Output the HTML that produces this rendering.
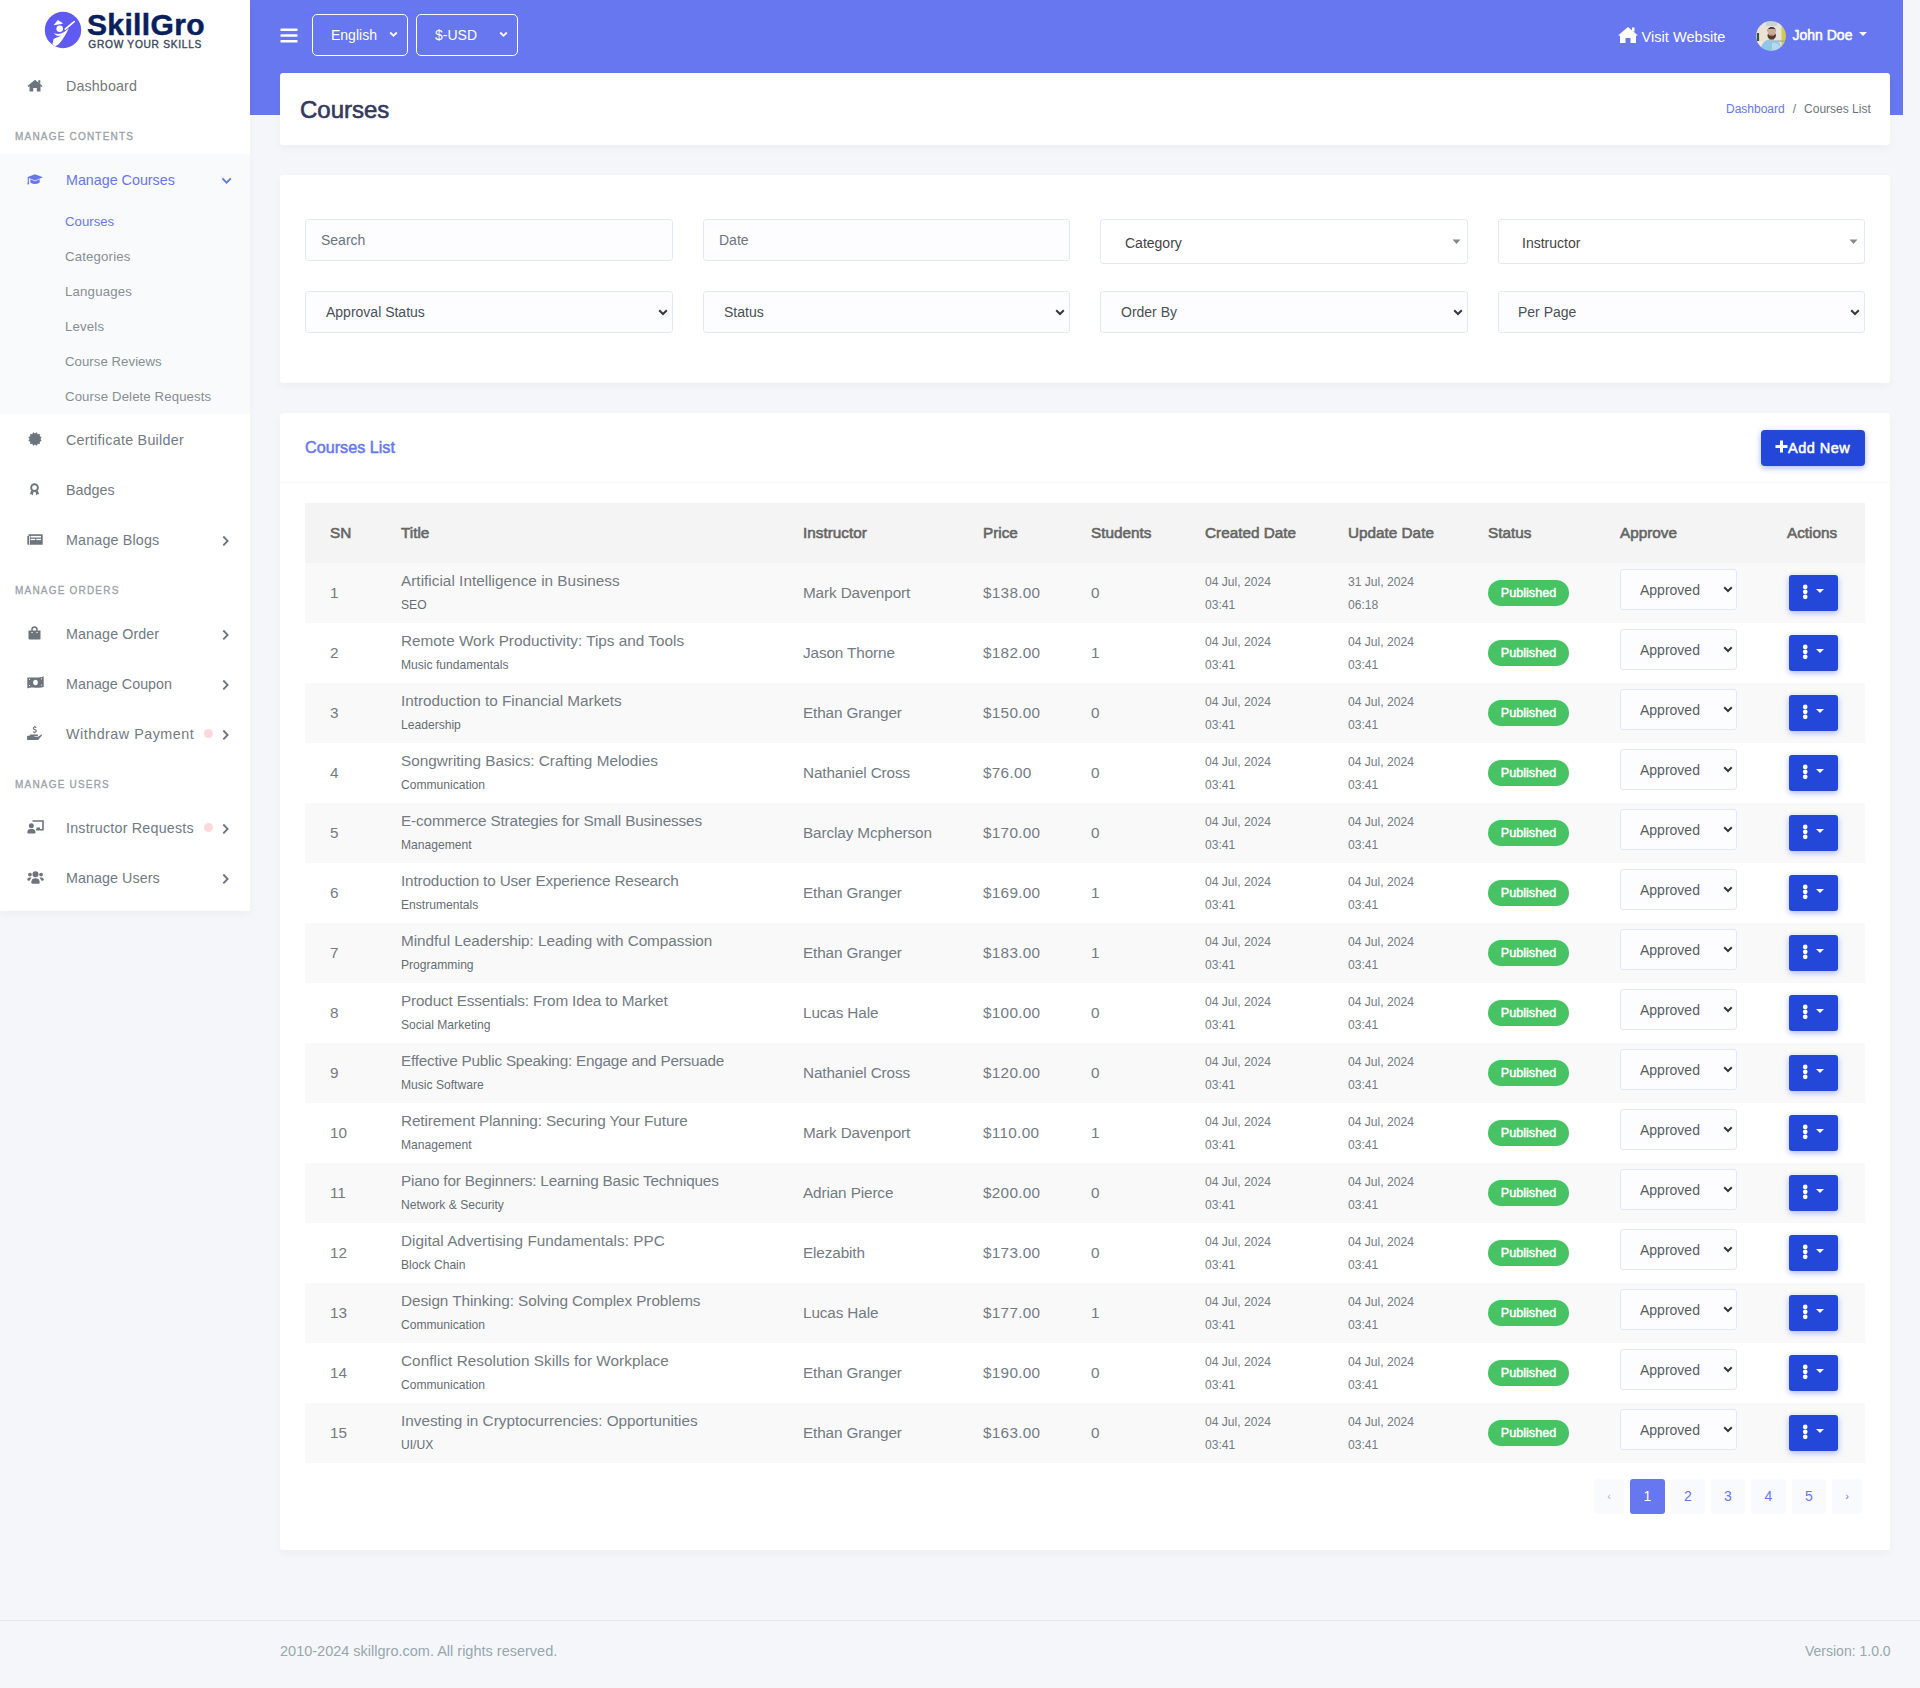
<!DOCTYPE html>
<html><head><meta charset="utf-8">
<style>
*{box-sizing:border-box}
html,body{margin:0;padding:0}
body{width:1920px;height:1688px;position:relative;overflow:hidden;background:#f4f6f9;font-family:"Liberation Sans",sans-serif;color:#6c757d}
.abs{position:absolute}
.navbg{position:absolute;left:250px;top:0;width:1653px;height:115px;background:#6777ef}
.side{position:absolute;left:0;top:0;width:250px;height:911px;background:#fff;box-shadow:0 4px 8px rgba(0,0,0,.03)}
.card{position:absolute;left:280px;width:1610px;background:#fff;border-radius:3px;box-shadow:0 4px 8px rgba(0,0,0,.03)}
.nav-item{position:absolute;left:0;width:250px;height:50px}
.nav-item .ic{position:absolute;left:27px;top:18px;width:15px;height:15px}
.nav-item .tx{position:absolute;left:66px;top:0;line-height:50px;font-size:14.3px;color:#727a82;white-space:nowrap;letter-spacing:0.15px}
.nav-item .chev{position:absolute;left:221px}
.mh{position:absolute;left:15px;font-size:10px;font-weight:400;letter-spacing:1.2px;color:#9aa1a8;line-height:20px;-webkit-text-stroke:0.3px #9aa1a8;margin-top:1px}
.sub{position:absolute;left:65px;font-size:13.2px;color:#868e96;line-height:20px;white-space:nowrap;letter-spacing:0.15px;margin-top:1px}
.dot{position:absolute;left:204px;width:9px;height:9px;border-radius:50%;background:#fdd7d9;margin-top:-1px}
.fc{position:absolute;height:42px;border:1px solid #e4e6fc;border-radius:3px;background:#fdfdff}
.fc .t{position:absolute;top:11px;font-size:14px;line-height:18px;white-space:nowrap}
.fc svg{position:absolute}
table{border-collapse:collapse;table-layout:fixed;position:absolute;left:25px;top:90px;width:1560px}
th{height:60px;padding:0 0 0 25px;text-align:left;font-size:15.3px;font-weight:400;color:#666;background:#f4f4f4;white-space:nowrap;-webkit-text-stroke:0.6px #666}
td{height:60px;padding:0 0 0 25px;font-size:15.3px;color:#737b83;white-space:nowrap;vertical-align:middle}
tbody tr:nth-child(odd) td{background:#f9f9f9}
.tt{font-size:15.3px;line-height:20px;display:block;margin-top:-3px}
.ts{color:#656d74;font-size:12.1px;line-height:18px;display:block;margin-top:3.5px;position:relative;top:2px}
.dt{font-size:12.1px;line-height:23.5px;padding-top:2px}
.badge{display:inline-block;width:81px;height:26px;border-radius:13px;background:#47c363;color:#fff;font-size:12.6px;line-height:26px;text-align:center;-webkit-text-stroke:0.45px #fff;position:relative;top:0px}
.apv{position:relative;width:117px;height:41px;border:1px solid #e4e6fc;border-radius:3px;background:#fdfdff;top:-3.5px}
.apv span{position:absolute;left:19px;top:11px;font-size:14px;line-height:18px;color:#575e65}
.apv svg{position:absolute;left:102px;top:16px}
.act{position:relative;width:49px;height:36px;border-radius:3px;background:#2347d9;box-shadow:0 2px 6px #acb5f6;margin-left:2px;top:-0.5px}
.act svg{position:absolute;left:0;top:0}
.pg{position:absolute;top:1066px;height:35px;border-radius:3px;background:#f9fafe;color:#6777ef;font-size:14px;line-height:35px;text-align:center}
</style></head>
<body>
<div class="navbg"></div>

<!-- SIDEBAR -->
<div class="side">
  <!-- logo -->
  <svg class="abs" style="left:44.35px;top:11.25px" width="38" height="38" viewBox="0 0 38 38">
    <defs><clipPath id="lc"><circle cx="19" cy="19" r="18.2"/></clipPath></defs>
    <circle cx="19" cy="19" r="18.2" fill="#5f5af6"/>
    <g clip-path="url(#lc)" fill="#fff">
    <path d="M13.8 9 L19.05 12.3 L17.5 12.9 L9.6 14.3 Z"/>
    <circle cx="15.7" cy="17.8" r="3.3"/>
    <path d="M24.8 17.3 C 22.5 22, 20 27.5, 15 33 L 11.6 35.3 L 8.2 34.3 L 9.6 28.1 C 12 26.6, 15 25.6, 18.3 24.2 C 15 25.2, 11.8 25.3, 9.8 21.9 C 13 23.3, 17 23.5, 20.8 20.5 Z"/>
    <path d="M21.3 18.2 L30.2 10.6" stroke="#fff" stroke-width="1.7" stroke-linecap="round"/>
    </g>
  </svg>
  <div class="abs" style="left:87px;top:7px;font-size:30px;font-weight:700;color:#0a1f5c;letter-spacing:0.35px;line-height:36px;-webkit-text-stroke:0.5px #0a1f5c">SkillGro</div>
  <div class="abs" style="left:88.3px;top:39.1px;font-size:10.2px;color:#434d60;letter-spacing:0.72px;line-height:12px;-webkit-text-stroke:0.4px #3f4a5e">GROW YOUR SKILLS</div>

  <div class="nav-item" style="top:61px">
    <svg class="ic" viewBox="0 0 16 13" style="left:27px;top:18px;width:16px;height:13px"><path d="M8 0.8 L15.5 7 L14.6 8 L13.5 7.1 L13.5 12.5 L9.8 12.5 L9.8 9 L6.2 9 L6.2 12.5 L2.5 12.5 L2.5 7.1 L1.4 8 L0.5 7 Z" fill="#6c757d"/><rect x="11.3" y="1.2" width="2" height="3.5" fill="#6c757d"/></svg>
    <div class="tx" style="letter-spacing:0.112px">Dashboard</div>
  </div>
  <div class="mh" style="top:126px">MANAGE CONTENTS</div>

  <div class="abs" style="left:0;top:154px;width:250px;height:260px;background:#f8fafb"></div>
  <div class="nav-item" style="top:155px">
    <svg class="ic" viewBox="0 0 16 11" style="left:27px;top:19px;width:16px;height:11px"><path d="M0 3.3 L8 0.2 L16 3.3 L8 6.4 Z M3.3 5.3 L3.3 8.6 Q8 11.6 12.7 8.6 L12.7 5.3 L8 7.2 Z" fill="#6777ef"/><path d="M1.3 3.6 L1.3 9.3" stroke="#6777ef" stroke-width="1.1"/><rect x="0.5" y="8.6" width="1.6" height="1.8" fill="#6777ef"/></svg>
    <div class="tx" style="color:#6777ef;letter-spacing:-0.004px">Manage Courses</div>
    <svg class="chev" style="top:22px" width="12" height="8" viewBox="0 0 12 8"><path d="M1.4 1.4 L5.6 5.6 L9.8 1.4" stroke="#6777ef" stroke-width="1.9" fill="none"/></svg>
  </div>
  <div class="sub" style="top:211px;color:#6777ef;letter-spacing:0.017px">Courses</div>
  <div class="sub" style="top:246px;letter-spacing:0.183px">Categories</div>
  <div class="sub" style="top:281px;letter-spacing:0.200px">Languages</div>
  <div class="sub" style="top:316px;letter-spacing:0.170px">Levels</div>
  <div class="sub" style="top:351px;letter-spacing:0.050px">Course Reviews</div>
  <div class="sub" style="top:386px;letter-spacing:0.117px">Course Delete Requests</div>

  <div class="nav-item" style="top:415px">
    <svg class="ic" viewBox="0 0 16 16" style="left:27px;top:15.5px;width:16px;height:16px"><path d="M9.79 1.34 L10.75 3.24 L12.88 3.12 L12.76 5.25 L14.66 6.21 L13.50 8.00 L14.66 9.79 L12.76 10.75 L12.88 12.88 L10.75 12.76 L9.79 14.66 L8.00 13.50 L6.21 14.66 L5.25 12.76 L3.12 12.88 L3.24 10.75 L1.34 9.79 L2.50 8.00 L1.34 6.21 L3.24 5.25 L3.12 3.12 L5.25 3.24 L6.21 1.34 L8.00 2.50 Z" fill="#6c757d"/></svg>
    <div class="tx" style="letter-spacing:0.272px">Certificate Builder</div>
  </div>
  <div class="nav-item" style="top:465px">
    <svg class="ic" viewBox="0 0 16 16" style="top:17px"><circle cx="8" cy="6" r="3.6" stroke="#6c757d" stroke-width="2" fill="none"/><path d="M4.5 9 L3 13 L5 13 L6 14.5 L7 10.5 Z M11.5 9 L13 13 L11 13 L10 14.5 L9 10.5 Z" fill="#6c757d"/></svg>
    <div class="tx" style="letter-spacing:0.010px">Badges</div>
  </div>
  <div class="nav-item" style="top:515px">
    <svg class="ic" viewBox="0 0 16 11" style="left:27px;top:19px;width:16px;height:11px"><path d="M1.5 0.3 L15.3 0.3 Q15.7 0.3 15.7 0.8 L15.7 10.2 Q15.7 10.7 15.2 10.7 L1 10.7 Q0.3 10.7 0.3 10 L0.3 2 L1.5 2 Z" fill="#6c757d"/><rect x="3.6" y="1.9" width="10.4" height="1.6" fill="#fff"/><rect x="3.6" y="4.8" width="4.6" height="1.3" fill="#fff"/><rect x="9.3" y="4.8" width="4.7" height="1.3" fill="#fff"/><rect x="2.2" y="2" width="0.8" height="8.7" fill="#fff"/></svg>
    <div class="tx" style="letter-spacing:0.159px">Manage Blogs</div>
    <svg class="chev" style="top:20px" width="10" height="12" viewBox="0 0 10 12"><path d="M2.3 1.5 L6.6 5.9 L2.3 10.3" stroke="#6c757d" stroke-width="1.9" fill="none"/></svg>
  </div>
  <div class="mh" style="top:580px">MANAGE ORDERS</div>
  <div class="nav-item" style="top:609px">
    <svg class="ic" style="left:28px;top:17px;width:13px;height:14px" viewBox="0 0 13 14"><path d="M4 5 L4 3.5 A2.5 2.5 0 0 1 9 3.5 L9 5" stroke="#6c757d" stroke-width="1.5" fill="none"/><path d="M0.5 4.5 L12.5 4.5 L12.5 12.5 Q12.5 13.5 11.5 13.5 L1.5 13.5 Q0.5 13.5 0.5 12.5 Z" fill="#6c757d"/><circle cx="4" cy="6.5" r="0.7" fill="#fff"/><circle cx="9" cy="6.5" r="0.7" fill="#fff"/></svg>
    <div class="tx" style="letter-spacing:0.086px">Manage Order</div>
    <svg class="chev" style="top:20px" width="10" height="12" viewBox="0 0 10 12"><path d="M2.3 1.5 L6.6 5.9 L2.3 10.3" stroke="#6c757d" stroke-width="1.9" fill="none"/></svg>
  </div>
  <div class="nav-item" style="top:659px">
    <svg class="ic" style="left:26.5px;top:17px;width:17px;height:13px" viewBox="0 0 17 13"><path d="M0.3 1.8 C5 0.5 11 3 16.7 0.3 L16.7 11 C11 12.8 5 10 0.3 12.5 Z" fill="#6c757d"/><ellipse cx="8.5" cy="6.5" rx="2.3" ry="2.7" fill="#fff"/><circle cx="2.5" cy="3.3" r="0.6" fill="#fff"/><circle cx="14.5" cy="9" r="0.6" fill="#fff"/><circle cx="2.5" cy="9.5" r="0.6" fill="#fff"/><circle cx="14.5" cy="2.8" r="0.6" fill="#fff"/></svg>
    <div class="tx" style="letter-spacing:0.025px">Manage Coupon</div>
    <svg class="chev" style="top:20px" width="10" height="12" viewBox="0 0 10 12"><path d="M2.3 1.5 L6.6 5.9 L2.3 10.3" stroke="#6c757d" stroke-width="1.9" fill="none"/></svg>
  </div>
  <div class="nav-item" style="top:709px">
    <svg class="ic" style="left:27px;top:16px;width:16px;height:15px" viewBox="0 0 16 15"><path d="M0.1 10.9 L2.8 10.4 L3.4 9.6 L10.6 9.6 Q11.4 10.1 10.6 10.9 L7.3 11.2 L7.3 11.7 L11 11.7 L14.6 9.6 Q15.4 9.8 14.9 10.6 L11 14.9 L0.1 14.9 Z" fill="#6c757d"/><path d="M9.2 2.7 Q8.8 2 7.8 2 Q6.4 2 6.4 3.3 Q6.4 4.3 7.9 4.6 Q9.3 4.9 9.3 6 Q9.3 7.2 7.8 7.2 Q6.7 7.2 6.2 6.5 M7.8 1 L7.8 2 M7.8 7.2 L7.8 8.2" stroke="#6c757d" stroke-width="1.15" fill="none"/></svg>
    <div class="tx" style="letter-spacing:0.510px">Withdraw Payment</div>
    <div class="dot" style="top:21px"></div>
    <svg class="chev" style="top:20px" width="10" height="12" viewBox="0 0 10 12"><path d="M2.3 1.5 L6.6 5.9 L2.3 10.3" stroke="#6c757d" stroke-width="1.9" fill="none"/></svg>
  </div>
  <div class="mh" style="top:774px">MANAGE USERS</div>
  <div class="nav-item" style="top:803px">
    <svg class="ic" style="left:26.7px;top:17px;width:17px;height:14px" viewBox="0 0 17 14"><path d="M5.5 1 L16 1 L16 9.8 L9 9.8" stroke="#6c757d" stroke-width="1.6" fill="none"/><circle cx="4.3" cy="5.8" r="2.5" fill="#6c757d"/><path d="M0.3 12.5 Q0.3 9 3.5 9 L5.5 9 Q8.5 9 8.5 12.5 Q8.5 13.5 7.5 13.5 L1.3 13.5 Q0.3 13.5 0.3 12.5 Z" fill="#6c757d"/><rect x="9.5" y="7.5" width="3.5" height="2.3" fill="#6c757d"/></svg>
    <div class="tx" style="letter-spacing:0.206px">Instructor Requests</div>
    <div class="dot" style="top:21px"></div>
    <svg class="chev" style="top:20px" width="10" height="12" viewBox="0 0 10 12"><path d="M2.3 1.5 L6.6 5.9 L2.3 10.3" stroke="#6c757d" stroke-width="1.9" fill="none"/></svg>
  </div>
  <div class="nav-item" style="top:853px">
    <svg class="ic" style="left:26.7px;top:17.5px;width:17px;height:13px" viewBox="0 0 17 13"><circle cx="8.5" cy="3.2" r="3" fill="#6c757d"/><circle cx="2.9" cy="3.6" r="1.9" fill="#6c757d"/><circle cx="14.1" cy="3.6" r="1.9" fill="#6c757d"/><path d="M4.3 11.5 Q4.3 7.2 8.5 7.2 Q12.7 7.2 12.7 11.5 Q12.7 12.7 11.5 12.7 L5.5 12.7 Q4.3 12.7 4.3 11.5 Z" fill="#6c757d"/><path d="M0.2 8.8 Q0.2 6.6 2.6 6.6 L4.5 6.6 L2.5 9.8 Q0.2 10 0.2 8.8 Z M16.8 8.8 Q16.8 6.6 14.4 6.6 L12.5 6.6 L14.5 9.8 Q16.8 10 16.8 8.8 Z" fill="#6c757d"/></svg>
    <div class="tx" style="letter-spacing:0.059px">Manage Users</div>
    <svg class="chev" style="top:20px" width="10" height="12" viewBox="0 0 10 12"><path d="M2.3 1.5 L6.6 5.9 L2.3 10.3" stroke="#6c757d" stroke-width="1.9" fill="none"/></svg>
  </div>
</div>

<!-- NAVBAR -->
<svg class="abs" style="left:280px;top:28px" width="18" height="15" viewBox="0 0 18 15"><rect x="0.5" y="0.5" width="17" height="2.6" rx="0.5" fill="#fff"/><rect x="0.5" y="6.2" width="17" height="2.6" rx="0.5" fill="#fff"/><rect x="0.5" y="11.9" width="17" height="2.6" rx="0.5" fill="#fff"/></svg>
<div class="abs" style="left:312px;top:14px;width:96px;height:42px;border:1px solid #fff;border-radius:5px"></div>
<div class="abs" style="left:331px;top:26px;font-size:14px;color:#fff;line-height:18px">English</div>
<svg class="abs" style="left:389px;top:31px" width="9" height="7" viewBox="0 0 9 7"><path d="M1.2 1.5 L4.5 4.8 L7.8 1.5" stroke="#fff" stroke-width="1.8" fill="none"/></svg>
<div class="abs" style="left:416px;top:14px;width:102px;height:42px;border:1px solid #fff;border-radius:5px"></div>
<div class="abs" style="left:435px;top:26px;font-size:14px;color:#fff;line-height:18px">$-USD</div>
<svg class="abs" style="left:499px;top:31px" width="9" height="7" viewBox="0 0 9 7"><path d="M1.2 1.5 L4.5 4.8 L7.8 1.5" stroke="#fff" stroke-width="1.8" fill="none"/></svg>

<svg class="abs" style="left:1617px;top:26px" width="22" height="18" viewBox="0 0 22 18"><path d="M11 1 L21 9.5 L19 9.5 L19 17 L13.5 17 L13.5 12 L8.5 12 L8.5 17 L3 17 L3 9.5 L1 9.5 Z" fill="#fff"/><rect x="15" y="1.5" width="2.5" height="4" fill="#fff"/></svg>
<div class="abs" style="left:1641.5px;top:28px;font-size:14.5px;color:#fff;line-height:18px;letter-spacing:0.05px">Visit Website</div>
<svg class="abs" style="left:1756px;top:20.8px" width="30" height="30" viewBox="0 0 30 30">
 <defs><clipPath id="av"><circle cx="15" cy="15" r="14.9"/></clipPath><filter id="bl" x="-10%" y="-10%" width="120%" height="120%"><feGaussianBlur stdDeviation="0.55"/></filter></defs>
 <g clip-path="url(#av)"><g filter="url(#bl)">
  <rect x="-2" y="-2" width="34" height="34" fill="#e7e4dc"/>
  <rect x="-2" y="8" width="10" height="12" fill="#eee2cf"/>
  <rect x="10" y="0" width="11" height="5" fill="#c9d2cb"/>
  <rect x="0.8" y="12" width="2.3" height="8" fill="#2f5a45"/>
  <rect x="25.5" y="5" width="6" height="20" fill="#d3cc4a"/>
  <rect x="19" y="19.5" width="11" height="1.2" fill="#9aa3a0"/>
  <rect x="-2" y="20" width="9" height="10" fill="#f1e6e0"/>
  <rect x="13.2" y="16" width="4.8" height="3.5" fill="#c08a6c"/>
  <ellipse cx="15.7" cy="14.6" rx="4.2" ry="3.6" fill="#4b3b31"/>
  <ellipse cx="15.7" cy="10.9" rx="4" ry="3.6" fill="#d0ab98"/>
  <ellipse cx="15.7" cy="14.3" rx="2" ry="0.9" fill="#a57a66"/>
  <path d="M11.4 11 C10.8 4.3 20.6 4.3 20 11 L19.3 8.3 C17.5 7.6 14 7.6 12.1 8.3 Z" fill="#3a3531"/>
  <path d="M3.5 31 L5.5 25 C7.5 21 10 19.2 12.5 18.8 L15.5 20 L19.5 19.6 C22.5 20.5 24.5 22.5 25 26 L25.5 31 Z" fill="#8fc7e4"/>
  <path d="M16 22 C19 21 22 22 24 25 L24.5 31 L16 31 Z" fill="#b3d9ec"/>
 </g></g>
</svg>
<div class="abs" style="left:1792.5px;top:26px;font-size:14px;color:#fff;line-height:18px;-webkit-text-stroke:0.5px #fff">John Doe</div>
<svg class="abs" style="left:1858px;top:31px" width="10" height="6" viewBox="0 0 10 6"><path d="M1 1 L9 1 L5 5 Z" fill="#fff"/></svg>

<!-- HEADER CARD -->
<div class="card" style="top:73px;height:72px">
  <div class="abs" style="left:20px;top:23px;font-size:24px;color:#34395e;line-height:28px;-webkit-text-stroke:0.6px #34395e">Courses</div>
  <div class="abs" style="left:1446px;top:28px;font-size:12px;line-height:16px;white-space:nowrap"><span style="color:#6777ef">Dashboard</span><span style="color:#6c757d;padding:0 8px">/</span><span style="color:#6c757d">Courses List</span></div>
</div>

<!-- FILTER CARD -->
<div class="card" style="top:175px;height:208px">
  <div class="fc" style="left:25px;top:44px;width:368px"><span class="t" style="left:15px;color:#6c757d">Search</span></div>
  <div class="fc" style="left:423px;top:44px;width:367px"><span class="t" style="left:15px;color:#6c757d">Date</span></div>
  <div class="fc" style="left:820px;top:44px;width:368px;height:45px;background:#fff"><span class="t" style="left:24px;top:14px;color:#444">Category</span><span style="position:absolute;left:351px;top:19px"><svg width="9" height="6" viewBox="0 0 9 6"><path d="M0.5 0.5 L8.5 0.5 L4.5 5 Z" fill="#888"/></svg></span></div>
  <div class="fc" style="left:1218px;top:44px;width:367px;height:45px;background:#fff"><span class="t" style="left:23px;top:14px;color:#444">Instructor</span><span style="position:absolute;left:350px;top:19px"><svg width="9" height="6" viewBox="0 0 9 6"><path d="M0.5 0.5 L8.5 0.5 L4.5 5 Z" fill="#888"/></svg></span></div>
  <div class="fc" style="left:25px;top:116px;width:368px"><span class="t" style="left:20px;color:#495057">Approval Status</span><span style="position:absolute;left:352px;top:17px"><svg width="10" height="7" viewBox="0 0 10 7"><path d="M1.2 1.2 L5 5 L8.8 1.2" stroke="#343a40" stroke-width="2" fill="none"/></svg></span></div>
  <div class="fc" style="left:423px;top:116px;width:367px"><span class="t" style="left:20px;color:#495057">Status</span><span style="position:absolute;left:351px;top:17px"><svg width="10" height="7" viewBox="0 0 10 7"><path d="M1.2 1.2 L5 5 L8.8 1.2" stroke="#343a40" stroke-width="2" fill="none"/></svg></span></div>
  <div class="fc" style="left:820px;top:116px;width:368px"><span class="t" style="left:20px;color:#495057">Order By</span><span style="position:absolute;left:352px;top:17px"><svg width="10" height="7" viewBox="0 0 10 7"><path d="M1.2 1.2 L5 5 L8.8 1.2" stroke="#343a40" stroke-width="2" fill="none"/></svg></span></div>
  <div class="fc" style="left:1218px;top:116px;width:367px"><span class="t" style="left:19px;color:#495057">Per Page</span><span style="position:absolute;left:351px;top:17px"><svg width="10" height="7" viewBox="0 0 10 7"><path d="M1.2 1.2 L5 5 L8.8 1.2" stroke="#343a40" stroke-width="2" fill="none"/></svg></span></div>
</div>
<!-- LIST CARD -->
<div class="card" style="top:413px;height:1137px">
  <div class="abs" style="left:25px;top:24px;font-size:16.2px;color:#6777ef;line-height:20px;-webkit-text-stroke:0.5px #6777ef">Courses List</div>
  <div class="abs" style="left:1481px;top:17px;width:104px;height:36px;border-radius:4px;background:#2347d9;box-shadow:0 2px 6px #acb5f6">
    <svg class="abs" style="left:14px;top:10px" width="13" height="13" viewBox="0 0 13 13"><path d="M5 0.5 H8 V5 H12.5 V8 H8 V12.5 H5 V8 H0.5 V5 H5 Z" fill="#fff"/></svg>
    <span class="abs" style="left:27px;top:9px;font-size:14.5px;color:#fff;line-height:18px;letter-spacing:0.5px;-webkit-text-stroke:0.5px #fff">Add New</span>
  </div>
  <div class="abs" style="left:0;top:69px;width:1610px;height:1px;background:#f9f9f9"></div>
  <table><colgroup><col style="width:71px"><col style="width:402px"><col style="width:180px"><col style="width:108px"><col style="width:114px"><col style="width:143px"><col style="width:140px"><col style="width:132px"><col style="width:167px"><col style="width:103px"></colgroup><thead><tr><th>SN</th><th>Title</th><th>Instructor</th><th>Price</th><th>Students</th><th>Created Date</th><th>Update Date</th><th>Status</th><th>Approve</th><th>Actions</th></tr></thead><tbody><tr><td>1</td><td><span class="tt" style="letter-spacing:0.029px">Artificial Intelligence in Business</span><span class="ts">SEO</span></td><td style="letter-spacing:-0.12px">Mark Davenport</td><td style="letter-spacing:0.3px">$138.00</td><td>0</td><td class="dt">04 Jul, 2024<br>03:41</td><td class="dt">31 Jul, 2024<br>06:18</td><td><span class="badge">Published</span></td><td><div class="apv"><span>Approved</span><svg width="10" height="7" viewBox="0 0 10 7"><path d="M1.2 1.2 L5 5 L8.8 1.2" stroke="#343a40" stroke-width="2" fill="none"/></svg></div></td><td><div class="act"><svg width="49" height="36" viewBox="0 0 49 36"><circle cx="16.25" cy="11.9" r="2.35" fill="#fff"/><circle cx="16.25" cy="16.85" r="2.35" fill="#fff"/><circle cx="16.25" cy="21.8" r="2.35" fill="#fff"/><path d="M27 14 L35 14 L31 18 Z" fill="#fff"/></svg></div></td></tr><tr><td>2</td><td><span class="tt" style="letter-spacing:0.015px">Remote Work Productivity: Tips and Tools</span><span class="ts">Music fundamentals</span></td><td style="letter-spacing:-0.12px">Jason Thorne</td><td style="letter-spacing:0.3px">$182.00</td><td>1</td><td class="dt">04 Jul, 2024<br>03:41</td><td class="dt">04 Jul, 2024<br>03:41</td><td><span class="badge">Published</span></td><td><div class="apv"><span>Approved</span><svg width="10" height="7" viewBox="0 0 10 7"><path d="M1.2 1.2 L5 5 L8.8 1.2" stroke="#343a40" stroke-width="2" fill="none"/></svg></div></td><td><div class="act"><svg width="49" height="36" viewBox="0 0 49 36"><circle cx="16.25" cy="11.9" r="2.35" fill="#fff"/><circle cx="16.25" cy="16.85" r="2.35" fill="#fff"/><circle cx="16.25" cy="21.8" r="2.35" fill="#fff"/><path d="M27 14 L35 14 L31 18 Z" fill="#fff"/></svg></div></td></tr><tr><td>3</td><td><span class="tt" style="letter-spacing:-0.013px">Introduction to Financial Markets</span><span class="ts">Leadership</span></td><td style="letter-spacing:-0.12px">Ethan Granger</td><td style="letter-spacing:0.3px">$150.00</td><td>0</td><td class="dt">04 Jul, 2024<br>03:41</td><td class="dt">04 Jul, 2024<br>03:41</td><td><span class="badge">Published</span></td><td><div class="apv"><span>Approved</span><svg width="10" height="7" viewBox="0 0 10 7"><path d="M1.2 1.2 L5 5 L8.8 1.2" stroke="#343a40" stroke-width="2" fill="none"/></svg></div></td><td><div class="act"><svg width="49" height="36" viewBox="0 0 49 36"><circle cx="16.25" cy="11.9" r="2.35" fill="#fff"/><circle cx="16.25" cy="16.85" r="2.35" fill="#fff"/><circle cx="16.25" cy="21.8" r="2.35" fill="#fff"/><path d="M27 14 L35 14 L31 18 Z" fill="#fff"/></svg></div></td></tr><tr><td>4</td><td><span class="tt" style="letter-spacing:0.003px">Songwriting Basics: Crafting Melodies</span><span class="ts">Communication</span></td><td style="letter-spacing:-0.12px">Nathaniel Cross</td><td style="letter-spacing:0.3px">$76.00</td><td>0</td><td class="dt">04 Jul, 2024<br>03:41</td><td class="dt">04 Jul, 2024<br>03:41</td><td><span class="badge">Published</span></td><td><div class="apv"><span>Approved</span><svg width="10" height="7" viewBox="0 0 10 7"><path d="M1.2 1.2 L5 5 L8.8 1.2" stroke="#343a40" stroke-width="2" fill="none"/></svg></div></td><td><div class="act"><svg width="49" height="36" viewBox="0 0 49 36"><circle cx="16.25" cy="11.9" r="2.35" fill="#fff"/><circle cx="16.25" cy="16.85" r="2.35" fill="#fff"/><circle cx="16.25" cy="21.8" r="2.35" fill="#fff"/><path d="M27 14 L35 14 L31 18 Z" fill="#fff"/></svg></div></td></tr><tr><td>5</td><td><span class="tt" style="letter-spacing:-0.141px">E-commerce Strategies for Small Businesses</span><span class="ts">Management</span></td><td style="letter-spacing:-0.12px">Barclay Mcpherson</td><td style="letter-spacing:0.3px">$170.00</td><td>0</td><td class="dt">04 Jul, 2024<br>03:41</td><td class="dt">04 Jul, 2024<br>03:41</td><td><span class="badge">Published</span></td><td><div class="apv"><span>Approved</span><svg width="10" height="7" viewBox="0 0 10 7"><path d="M1.2 1.2 L5 5 L8.8 1.2" stroke="#343a40" stroke-width="2" fill="none"/></svg></div></td><td><div class="act"><svg width="49" height="36" viewBox="0 0 49 36"><circle cx="16.25" cy="11.9" r="2.35" fill="#fff"/><circle cx="16.25" cy="16.85" r="2.35" fill="#fff"/><circle cx="16.25" cy="21.8" r="2.35" fill="#fff"/><path d="M27 14 L35 14 L31 18 Z" fill="#fff"/></svg></div></td></tr><tr><td>6</td><td><span class="tt" style="letter-spacing:-0.159px">Introduction to User Experience Research</span><span class="ts">Enstrumentals</span></td><td style="letter-spacing:-0.12px">Ethan Granger</td><td style="letter-spacing:0.3px">$169.00</td><td>1</td><td class="dt">04 Jul, 2024<br>03:41</td><td class="dt">04 Jul, 2024<br>03:41</td><td><span class="badge">Published</span></td><td><div class="apv"><span>Approved</span><svg width="10" height="7" viewBox="0 0 10 7"><path d="M1.2 1.2 L5 5 L8.8 1.2" stroke="#343a40" stroke-width="2" fill="none"/></svg></div></td><td><div class="act"><svg width="49" height="36" viewBox="0 0 49 36"><circle cx="16.25" cy="11.9" r="2.35" fill="#fff"/><circle cx="16.25" cy="16.85" r="2.35" fill="#fff"/><circle cx="16.25" cy="21.8" r="2.35" fill="#fff"/><path d="M27 14 L35 14 L31 18 Z" fill="#fff"/></svg></div></td></tr><tr><td>7</td><td><span class="tt" style="letter-spacing:-0.038px">Mindful Leadership: Leading with Compassion</span><span class="ts">Programming</span></td><td style="letter-spacing:-0.12px">Ethan Granger</td><td style="letter-spacing:0.3px">$183.00</td><td>1</td><td class="dt">04 Jul, 2024<br>03:41</td><td class="dt">04 Jul, 2024<br>03:41</td><td><span class="badge">Published</span></td><td><div class="apv"><span>Approved</span><svg width="10" height="7" viewBox="0 0 10 7"><path d="M1.2 1.2 L5 5 L8.8 1.2" stroke="#343a40" stroke-width="2" fill="none"/></svg></div></td><td><div class="act"><svg width="49" height="36" viewBox="0 0 49 36"><circle cx="16.25" cy="11.9" r="2.35" fill="#fff"/><circle cx="16.25" cy="16.85" r="2.35" fill="#fff"/><circle cx="16.25" cy="21.8" r="2.35" fill="#fff"/><path d="M27 14 L35 14 L31 18 Z" fill="#fff"/></svg></div></td></tr><tr><td>8</td><td><span class="tt" style="letter-spacing:-0.163px">Product Essentials: From Idea to Market</span><span class="ts">Social Marketing</span></td><td style="letter-spacing:-0.12px">Lucas Hale</td><td style="letter-spacing:0.3px">$100.00</td><td>0</td><td class="dt">04 Jul, 2024<br>03:41</td><td class="dt">04 Jul, 2024<br>03:41</td><td><span class="badge">Published</span></td><td><div class="apv"><span>Approved</span><svg width="10" height="7" viewBox="0 0 10 7"><path d="M1.2 1.2 L5 5 L8.8 1.2" stroke="#343a40" stroke-width="2" fill="none"/></svg></div></td><td><div class="act"><svg width="49" height="36" viewBox="0 0 49 36"><circle cx="16.25" cy="11.9" r="2.35" fill="#fff"/><circle cx="16.25" cy="16.85" r="2.35" fill="#fff"/><circle cx="16.25" cy="21.8" r="2.35" fill="#fff"/><path d="M27 14 L35 14 L31 18 Z" fill="#fff"/></svg></div></td></tr><tr><td>9</td><td><span class="tt" style="letter-spacing:-0.216px">Effective Public Speaking: Engage and Persuade</span><span class="ts">Music Software</span></td><td style="letter-spacing:-0.12px">Nathaniel Cross</td><td style="letter-spacing:0.3px">$120.00</td><td>0</td><td class="dt">04 Jul, 2024<br>03:41</td><td class="dt">04 Jul, 2024<br>03:41</td><td><span class="badge">Published</span></td><td><div class="apv"><span>Approved</span><svg width="10" height="7" viewBox="0 0 10 7"><path d="M1.2 1.2 L5 5 L8.8 1.2" stroke="#343a40" stroke-width="2" fill="none"/></svg></div></td><td><div class="act"><svg width="49" height="36" viewBox="0 0 49 36"><circle cx="16.25" cy="11.9" r="2.35" fill="#fff"/><circle cx="16.25" cy="16.85" r="2.35" fill="#fff"/><circle cx="16.25" cy="21.8" r="2.35" fill="#fff"/><path d="M27 14 L35 14 L31 18 Z" fill="#fff"/></svg></div></td></tr><tr><td>10</td><td><span class="tt" style="letter-spacing:-0.100px">Retirement Planning: Securing Your Future</span><span class="ts">Management</span></td><td style="letter-spacing:-0.12px">Mark Davenport</td><td style="letter-spacing:0.3px">$110.00</td><td>1</td><td class="dt">04 Jul, 2024<br>03:41</td><td class="dt">04 Jul, 2024<br>03:41</td><td><span class="badge">Published</span></td><td><div class="apv"><span>Approved</span><svg width="10" height="7" viewBox="0 0 10 7"><path d="M1.2 1.2 L5 5 L8.8 1.2" stroke="#343a40" stroke-width="2" fill="none"/></svg></div></td><td><div class="act"><svg width="49" height="36" viewBox="0 0 49 36"><circle cx="16.25" cy="11.9" r="2.35" fill="#fff"/><circle cx="16.25" cy="16.85" r="2.35" fill="#fff"/><circle cx="16.25" cy="21.8" r="2.35" fill="#fff"/><path d="M27 14 L35 14 L31 18 Z" fill="#fff"/></svg></div></td></tr><tr><td>11</td><td><span class="tt" style="letter-spacing:-0.169px">Piano for Beginners: Learning Basic Techniques</span><span class="ts">Network &amp; Security</span></td><td style="letter-spacing:-0.12px">Adrian Pierce</td><td style="letter-spacing:0.3px">$200.00</td><td>0</td><td class="dt">04 Jul, 2024<br>03:41</td><td class="dt">04 Jul, 2024<br>03:41</td><td><span class="badge">Published</span></td><td><div class="apv"><span>Approved</span><svg width="10" height="7" viewBox="0 0 10 7"><path d="M1.2 1.2 L5 5 L8.8 1.2" stroke="#343a40" stroke-width="2" fill="none"/></svg></div></td><td><div class="act"><svg width="49" height="36" viewBox="0 0 49 36"><circle cx="16.25" cy="11.9" r="2.35" fill="#fff"/><circle cx="16.25" cy="16.85" r="2.35" fill="#fff"/><circle cx="16.25" cy="21.8" r="2.35" fill="#fff"/><path d="M27 14 L35 14 L31 18 Z" fill="#fff"/></svg></div></td></tr><tr><td>12</td><td><span class="tt" style="letter-spacing:0.028px">Digital Advertising Fundamentals: PPC</span><span class="ts">Block Chain</span></td><td style="letter-spacing:-0.12px">Elezabith</td><td style="letter-spacing:0.3px">$173.00</td><td>0</td><td class="dt">04 Jul, 2024<br>03:41</td><td class="dt">04 Jul, 2024<br>03:41</td><td><span class="badge">Published</span></td><td><div class="apv"><span>Approved</span><svg width="10" height="7" viewBox="0 0 10 7"><path d="M1.2 1.2 L5 5 L8.8 1.2" stroke="#343a40" stroke-width="2" fill="none"/></svg></div></td><td><div class="act"><svg width="49" height="36" viewBox="0 0 49 36"><circle cx="16.25" cy="11.9" r="2.35" fill="#fff"/><circle cx="16.25" cy="16.85" r="2.35" fill="#fff"/><circle cx="16.25" cy="21.8" r="2.35" fill="#fff"/><path d="M27 14 L35 14 L31 18 Z" fill="#fff"/></svg></div></td></tr><tr><td>13</td><td><span class="tt" style="letter-spacing:-0.052px">Design Thinking: Solving Complex Problems</span><span class="ts">Communication</span></td><td style="letter-spacing:-0.12px">Lucas Hale</td><td style="letter-spacing:0.3px">$177.00</td><td>1</td><td class="dt">04 Jul, 2024<br>03:41</td><td class="dt">04 Jul, 2024<br>03:41</td><td><span class="badge">Published</span></td><td><div class="apv"><span>Approved</span><svg width="10" height="7" viewBox="0 0 10 7"><path d="M1.2 1.2 L5 5 L8.8 1.2" stroke="#343a40" stroke-width="2" fill="none"/></svg></div></td><td><div class="act"><svg width="49" height="36" viewBox="0 0 49 36"><circle cx="16.25" cy="11.9" r="2.35" fill="#fff"/><circle cx="16.25" cy="16.85" r="2.35" fill="#fff"/><circle cx="16.25" cy="21.8" r="2.35" fill="#fff"/><path d="M27 14 L35 14 L31 18 Z" fill="#fff"/></svg></div></td></tr><tr><td>14</td><td><span class="tt" style="letter-spacing:0.049px">Conflict Resolution Skills for Workplace</span><span class="ts">Communication</span></td><td style="letter-spacing:-0.12px">Ethan Granger</td><td style="letter-spacing:0.3px">$190.00</td><td>0</td><td class="dt">04 Jul, 2024<br>03:41</td><td class="dt">04 Jul, 2024<br>03:41</td><td><span class="badge">Published</span></td><td><div class="apv"><span>Approved</span><svg width="10" height="7" viewBox="0 0 10 7"><path d="M1.2 1.2 L5 5 L8.8 1.2" stroke="#343a40" stroke-width="2" fill="none"/></svg></div></td><td><div class="act"><svg width="49" height="36" viewBox="0 0 49 36"><circle cx="16.25" cy="11.9" r="2.35" fill="#fff"/><circle cx="16.25" cy="16.85" r="2.35" fill="#fff"/><circle cx="16.25" cy="21.8" r="2.35" fill="#fff"/><path d="M27 14 L35 14 L31 18 Z" fill="#fff"/></svg></div></td></tr><tr><td>15</td><td><span class="tt" style="letter-spacing:-0.002px">Investing in Cryptocurrencies: Opportunities</span><span class="ts">UI/UX</span></td><td style="letter-spacing:-0.12px">Ethan Granger</td><td style="letter-spacing:0.3px">$163.00</td><td>0</td><td class="dt">04 Jul, 2024<br>03:41</td><td class="dt">04 Jul, 2024<br>03:41</td><td><span class="badge">Published</span></td><td><div class="apv"><span>Approved</span><svg width="10" height="7" viewBox="0 0 10 7"><path d="M1.2 1.2 L5 5 L8.8 1.2" stroke="#343a40" stroke-width="2" fill="none"/></svg></div></td><td><div class="act"><svg width="49" height="36" viewBox="0 0 49 36"><circle cx="16.25" cy="11.9" r="2.35" fill="#fff"/><circle cx="16.25" cy="16.85" r="2.35" fill="#fff"/><circle cx="16.25" cy="21.8" r="2.35" fill="#fff"/><path d="M27 14 L35 14 L31 18 Z" fill="#fff"/></svg></div></td></tr></tbody></table>
  <div class="pg" style="left:1314px;width:30px;font-size:11px;color:#a3adf5">&#8249;</div>
  <div class="pg" style="left:1350px;width:35px;background:#6777ef;color:#fff">1</div>
  <div class="pg" style="left:1391px;width:34px">2</div>
  <div class="pg" style="left:1431px;width:34px">3</div>
  <div class="pg" style="left:1471px;width:35px">4</div>
  <div class="pg" style="left:1512px;width:34px">5</div>
  <div class="pg" style="left:1552px;width:30px;font-size:11px">&#8250;</div>
</div>

<!-- FOOTER -->
<div class="abs" style="left:0;top:1620px;width:1920px;height:1px;background:#e3e6ea"></div>
<div class="abs" style="left:280px;top:1642px;font-size:14.5px;color:#98a6ad;line-height:18px">2010-2024 skillgro.com. All rights reserved.</div>
<div class="abs" style="left:1805px;top:1642px;font-size:14px;color:#98a6ad;line-height:18px">Version: 1.0.0</div>

</body></html>
